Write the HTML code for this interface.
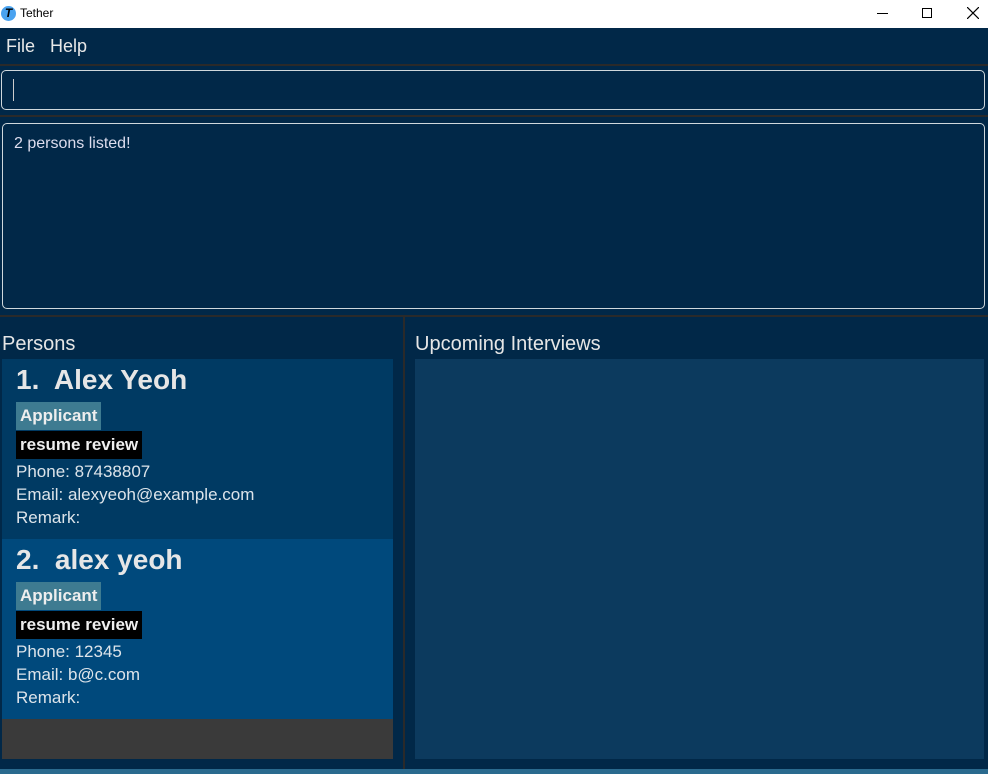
<!DOCTYPE html>
<html><head><meta charset="utf-8"><style>
*{margin:0;padding:0;box-sizing:border-box}
body{width:988px;height:774px;background:#012848;font-family:"Segoe UI","Liberation Sans",sans-serif;position:relative;overflow:hidden;color:#fff}
.abs{position:absolute}
.title{left:0;top:0;width:988px;height:28px;background:#fff;color:#000;font-size:12px}
.menu{top:28px;left:0;width:988px;height:36px;background:#012848;font-size:18px;color:#e8e8e8}
.sep{background:#2a2a2a}
.box{border:1px solid #cfd8dc;border-radius:5px;background:#012848}
.tag{font-weight:bold;font-size:17px;color:#eee;padding:0 4px;height:28px;line-height:28px;display:inline-block}
.card{left:2px;width:391px;height:180px;padding:0 0 0 14px;color:#dde}
.name{font-size:28px;font-weight:bold;line-height:40px;margin-top:1px;color:#e6e6e6}
.line{font-size:17px;line-height:23px;color:#dde4ea}
</style></head><body>
<div class="abs title">
 <div class="abs" style="left:1px;top:6px;width:15px;height:15px;border-radius:50%;background:#4aa3f0;color:#000;font-size:12px;font-weight:bold;text-align:center;line-height:15px;font-style:italic">T</div>
 <div class="abs" style="left:20px;top:6px">Tether</div>
 <div class="abs" style="left:877px;top:13px;width:11px;height:1px;background:#000"></div>
 <div class="abs" style="left:922px;top:8px;width:10px;height:10px;border:1px solid #000"></div>
 <svg class="abs" style="left:967px;top:7px" width="12" height="12"><path d="M0 0L12 12M12 0L0 12" stroke="#000" stroke-width="1.2"/></svg>
</div>
<div class="abs menu"><span class="abs" style="left:6px;top:8px">File</span><span class="abs" style="left:50px;top:8px">Help</span></div>
<div class="abs sep" style="left:0;top:64px;width:988px;height:2px"></div>
<div class="abs box" style="left:1px;top:70px;width:984px;height:40px"><div class="abs" style="left:11px;top:8px;width:1px;height:22px;background:#ccc"></div></div>
<div class="abs sep" style="left:0;top:115px;width:988px;height:2px"></div>
<div class="abs box" style="left:2px;top:123px;width:983px;height:186px"><div class="abs" style="left:11px;top:11px;font-size:16px;color:#dde">2 persons listed!</div></div>
<div class="abs sep" style="left:0;top:315px;width:988px;height:2px"></div>
<div class="abs sep" style="left:403px;top:317px;width:2px;height:452px"></div>
<div class="abs" style="left:2px;top:333px;font-size:20px;color:#e6e6e6">Persons</div>
<div class="abs" style="left:415px;top:333px;font-size:20px;color:#e6e6e6">Upcoming Interviews</div>
<div class="abs card" style="top:359px;background:#003a63">
 <div class="name">1.&nbsp; Alex Yeoh</div>
 <div style="margin-top:2px"><span class="tag" style="background:#3e7b91">Applicant</span></div>
 <div style="margin-top:1px"><span class="tag" style="background:#000">resume review</span></div>
 <div class="line" style="margin-top:1px">Phone: 87438807</div><div class="line">Email: alexyeoh@example.com</div><div class="line">Remark:</div>
</div>
<div class="abs card" style="top:539px;background:#00497c">
 <div class="name">2.&nbsp; alex yeoh</div>
 <div style="margin-top:2px"><span class="tag" style="background:#3e7b91">Applicant</span></div>
 <div style="margin-top:1px"><span class="tag" style="background:#000">resume review</span></div>
 <div class="line" style="margin-top:1px">Phone: 12345</div><div class="line">Email: b@c.com</div><div class="line">Remark:</div>
</div>
<div class="abs" style="left:2px;top:719px;width:391px;height:40px;background:#3a3a3a"></div>
<div class="abs" style="left:415px;top:359px;width:569px;height:400px;background:#0c3a5e"></div>
<div class="abs" style="left:0;top:769px;width:988px;height:5px;background:#2a6a8e"></div>
</body></html>
